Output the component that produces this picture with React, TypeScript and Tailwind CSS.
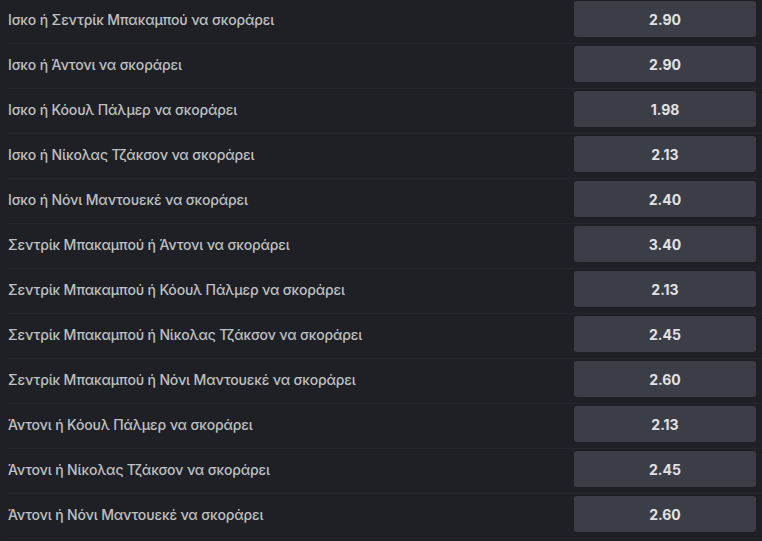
const rows = [
  { label: "Ισκο ή Σεντρίκ Μπακαμπού να σκοράρει", odds: "2.90" },
  { label: "Ισκο ή Άντονι να σκοράρει", odds: "2.90" },
  { label: "Ισκο ή Κόουλ Πάλμερ να σκοράρει", odds: "1.98" },
  { label: "Ισκο ή Νίκολας Τζάκσον να σκοράρει", odds: "2.13" },
  { label: "Ισκο ή Νόνι Μαντουεκέ να σκοράρει", odds: "2.40" },
  { label: "Σεντρίκ Μπακαμπού ή Άντονι να σκοράρει", odds: "3.40" },
  { label: "Σεντρίκ Μπακαμπού ή Κόουλ Πάλμερ να σκοράρει", odds: "2.13" },
  { label: "Σεντρίκ Μπακαμπού ή Νίκολας Τζάκσον να σκοράρει", odds: "2.45" },
  { label: "Σεντρίκ Μπακαμπού ή Νόνι Μαντουεκέ να σκοράρει", odds: "2.60" },
  { label: "Άντονι ή Κόουλ Πάλμερ να σκοράρει", odds: "2.13" },
  { label: "Άντονι ή Νίκολας Τζάκσον να σκοράρει", odds: "2.45" },
  { label: "Άντονι ή Νόνι Μαντουεκέ να σκοράρει", odds: "2.60" },
];

export default function App() {
  return (
    <div className="w-[762px] h-[541px] overflow-hidden bg-[#1e2025] font-['Inter','Noto_Sans',sans-serif]">
      {rows.map((row, i) => (
        <div key={i} className="relative flex h-[45px] items-start pt-px pr-[6px]">
          <div className="flex h-9 flex-1 items-center pl-2 text-[14px] font-medium tracking-[-0.15px] text-[#bfc0c3]">
            {row.label}
          </div>
          <button className="flex h-9 w-[182px] items-center justify-center rounded-[3px] bg-[#3b3e46] text-[14px] font-bold text-[#e2e2e4]">
            {row.odds}
          </button>
          <div className="absolute bottom-px left-2 right-0 h-px bg-[#25272c]" />
        </div>
      ))}
    </div>
  );
}
